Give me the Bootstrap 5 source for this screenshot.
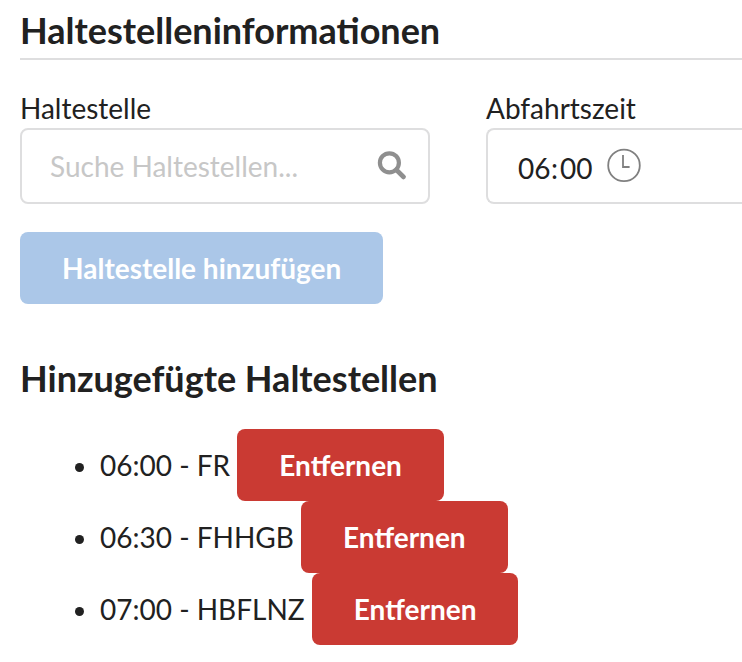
<!DOCTYPE html>
<html lang="de">
<head>
<meta charset="utf-8">
<meta name="viewport" content="width=device-width, initial-scale=1">
<title>Haltestelleninformationen</title>
<link href="https://cdn.jsdelivr.net/npm/bootstrap@5.3.0/dist/css/bootstrap.min.css" rel="stylesheet">
<style>
body{font-family:Lato,"Liberation Sans",sans-serif;font-size:28px;line-height:40px;color:#212121}
h3{font-size:36px;line-height:46px;font-weight:700;margin:0}
.page{padding:7px 0 16px 20px}
.section-head{border-bottom:2px solid #dededf;padding-bottom:5px}
.stop-fields{display:grid;grid-template-columns:410px 1fr;column-gap:56px;margin-top:30px}
.stop-fields label{display:block;line-height:36px;padding-bottom:2px}
.field{height:76px;border:2px solid #dededf;border-radius:8px;background:#fff;padding:0 20px 0 28px}
.field-open{border-right:0;border-radius:8px 0 0 8px}
.field input{border:0;outline:0;background:none;color:inherit;padding:0;min-width:0}
.field input::placeholder{color:#c7c7c7;opacity:1}
.time{padding-top:4px}
.field .time input{width:35px;padding:0 0 0 2px}
.clock{margin-left:13px}
.action{border:0;border-radius:8px;height:72px;padding:0 42px;color:#fff;font-weight:700;line-height:40px}
.action-add{background:#abc7e8;margin-top:28px}
.action-remove{background:#ca3a33;vertical-align:baseline}
.added{margin-top:51px}
.stop-list{padding-left:80px;margin:28px 0 0}
</style>
</head>
<body>
<main class="page">
<div class="section-head"><h3>Haltestelleninformationen</h3></div>
<form class="stop-fields">
<div><label for="stop">Haltestelle</label>
<div class="field d-flex align-items-center"><input class="flex-grow-1" id="stop" type="text" placeholder="Suche Haltestellen...">
<svg class="flex-shrink-0" width="32" height="32" viewBox="0 0 32 32" fill="none" stroke="#8f8f8f" aria-hidden="true"><circle cx="13.4" cy="12.8" r="9.5" stroke-width="4.2"/><path d="M20.5 20L27.6 27" stroke-width="4.6" stroke-linecap="round"/></svg></div></div>
<div><label for="hour">Abfahrtszeit</label>
<div class="field field-open d-flex align-items-center"><div class="time d-flex align-items-center"><input id="hour" type="text" inputmode="numeric" value="06"><label class="p-0" for="minute">:</label><input id="minute" type="text" inputmode="numeric" value="00"></div>
<svg class="clock flex-shrink-0" width="36" height="36" viewBox="0 0 36 36" fill="none" stroke="#808080" stroke-width="1.8" aria-hidden="true"><circle cx="18" cy="17.4" r="15.8"/><path d="M17 7v12h6.6"/></svg></div></div>
</form>
<button class="action action-add" type="button">Haltestelle hinzufügen</button>
<h3 class="added">Hinzugefügte Haltestellen</h3>
<ul class="stop-list">
<li>06:00 - FR <button class="action action-remove" type="button">Entfernen</button></li>
<li>06:30 - FHHGB <button class="action action-remove" type="button">Entfernen</button></li>
<li>07:00 - HBFLNZ <button class="action action-remove" type="button">Entfernen</button></li>
</ul>
</main>
<script src="https://cdn.jsdelivr.net/npm/bootstrap@5.3.0/dist/js/bootstrap.bundle.min.js"></script>
</body>
</html>
